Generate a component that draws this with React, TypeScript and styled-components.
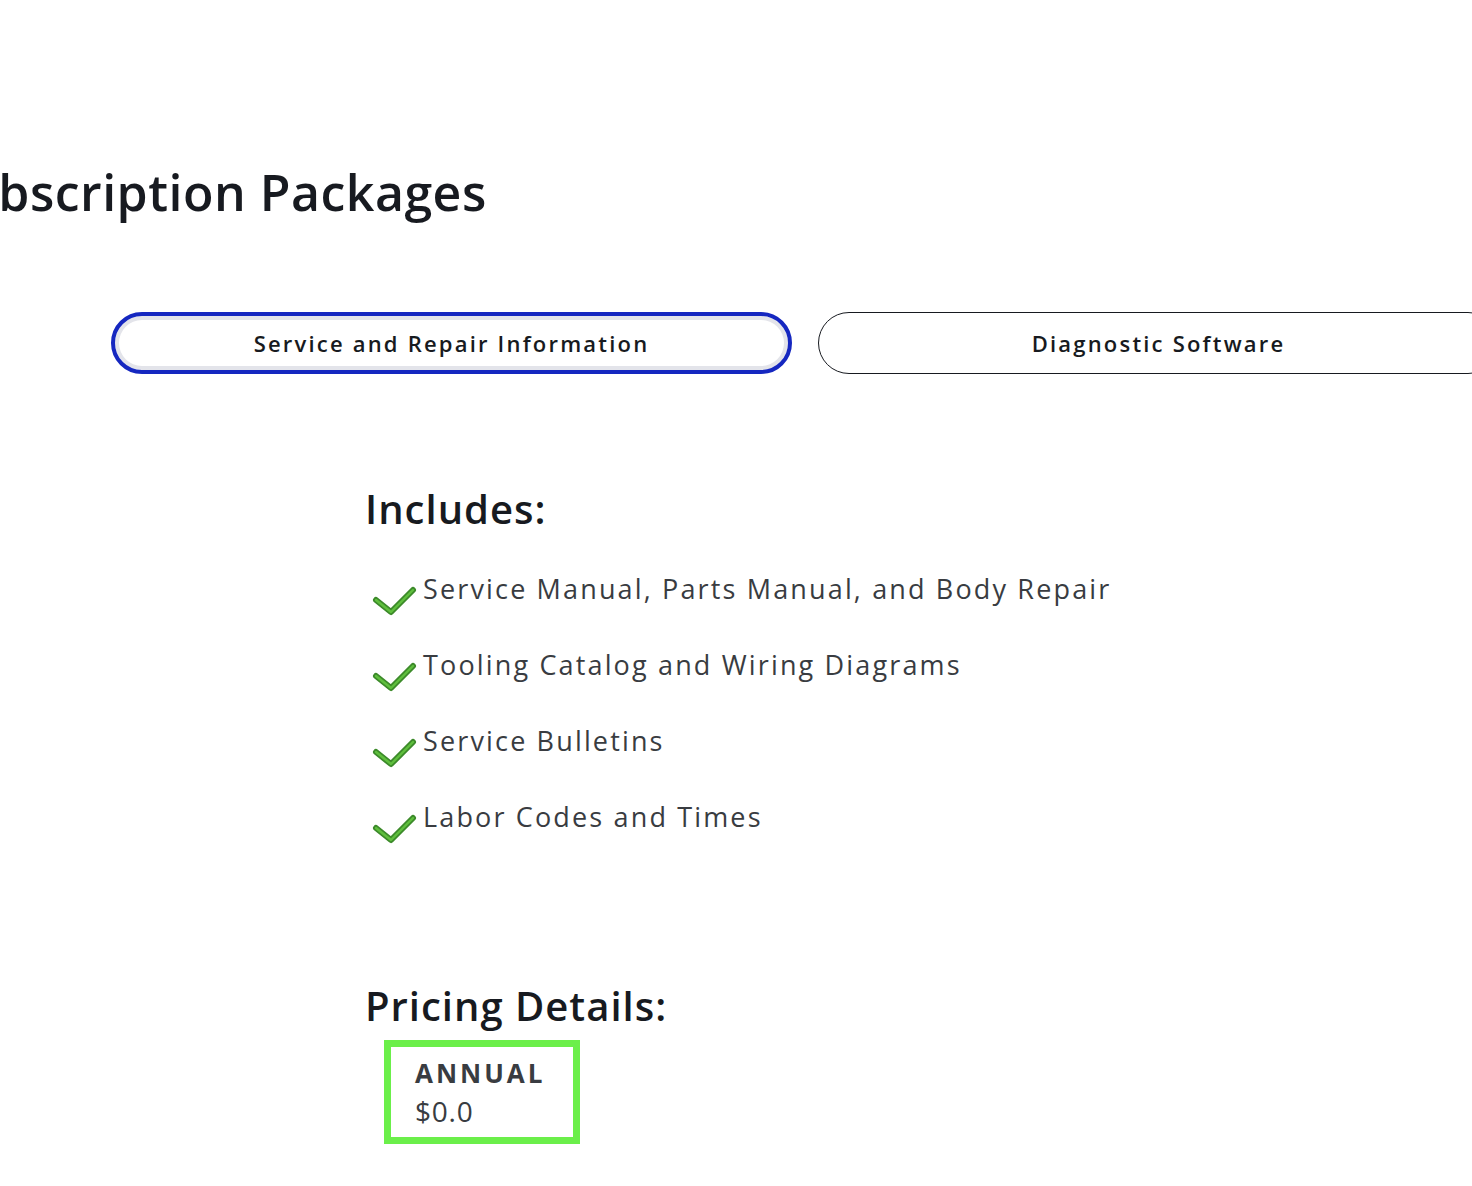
import React, { useState } from "react";
import styled, { createGlobalStyle } from "styled-components";

const INCLUDES = [
  "Service Manual, Parts Manual, and Body Repair",
  "Tooling Catalog and Wiring Diagrams",
  "Service Bulletins",
  "Labor Codes and Times",
];

const TABS = ["Service and Repair Information", "Diagnostic Software"];

const GlobalStyle = createGlobalStyle`
  html, body {
    margin: 0;
    padding: 0;
    background: #fff;
    overflow-x: hidden;
  }
  body {
    font-family: "Open Sans", "Lato", "Liberation Sans", sans-serif;
    color: #171a20;
  }
`;

const CheckIcon = () => (
  <svg width="46" height="36" viewBox="0 0 46 36" fill="none">
    <polyline
      points="5,18 20,30 42,8"
      stroke="#3c8a2a"
      strokeWidth="6"
      strokeLinecap="round"
      strokeLinejoin="round"
    />
    <polyline
      points="5,18 20,30 42,8"
      stroke="#5fbf3d"
      strokeWidth="2.4"
      strokeLinecap="round"
      strokeLinejoin="round"
    />
  </svg>
);

const App: React.FC = () => {
  const [active, setActive] = useState(0);

  return (
    <>
      <GlobalStyle />
      <StyledPage>
        <StyledTitle>Subscription Packages</StyledTitle>
        <StyledTabs>
          {TABS.map((tab, index) => (
            <StyledTab
              key={tab}
              active={active === index}
              onClick={() => setActive(index)}
            >
              {tab}
            </StyledTab>
          ))}
        </StyledTabs>
        <StyledContent>
          <StyledHeading>Includes:</StyledHeading>
          <StyledList>
            {INCLUDES.map((item) => (
              <StyledItem key={item}>
                <CheckIcon />
                <span>{item}</span>
              </StyledItem>
            ))}
          </StyledList>
          <StyledHeading top={143}>Pricing Details:</StyledHeading>
          <StyledPriceBox>
            <StyledPriceLabel>ANNUAL</StyledPriceLabel>
            <StyledPriceValue>$0.0</StyledPriceValue>
          </StyledPriceBox>
        </StyledContent>
      </StyledPage>
    </>
  );
};
export default App;

const StyledPage = styled.div`
  padding-top: 162px;
  padding-bottom: 40px;
`;

const StyledTitle = styled.h1`
  margin: 0 0 0 -62px;
  font-size: 50px;
  font-weight: 600;
  line-height: 60px;
  letter-spacing: 0.5px;
  white-space: nowrap;
  color: #171a20;
`;

const StyledTabs = styled.div`
  display: flex;
  gap: 26px;
  margin-top: 90px;
  margin-left: 111px;
  width: 1388px;
`;

const StyledTab = styled.button<{ active: boolean }>`
  flex: 0 0 681px;
  height: 62px;
  box-sizing: border-box;
  border-radius: 31px;
  background: #fff;
  border: ${(props) =>
    props.active ? "4px solid #1527c0" : "1.5px solid #171a20"};
  box-shadow: ${(props) => (props.active ? "inset 0 0 0 4px #e3e4ea" : "none")};
  font-family: "Open Sans", "Liberation Sans", sans-serif;
  font-size: 22px;
  font-weight: 600;
  letter-spacing: 2.2px;
  color: #171a20;
  cursor: pointer;
`;

const StyledContent = styled.section`
  margin-left: 365px;
  padding-top: 110px;
`;

const StyledHeading = styled.h2<{ top?: number }>`
  margin: ${(props) => (props.top ? props.top + "px" : "0")} 0 0;
  font-size: 40px;
  font-weight: 600;
  line-height: 50px;
  letter-spacing: 1px;
  color: #171a20;
`;

const StyledList = styled.ul`
  list-style: none;
  margin: 40px 0 0;
  padding: 0 0 0 6px;
  display: flex;
  flex-direction: column;
  gap: 40px;
`;

const StyledItem = styled.li`
  display: flex;
  align-items: flex-start;
  gap: 6px;
  height: 36px;
  font-size: 27px;
  line-height: 30px;
  letter-spacing: 2.15px;
  color: #393c41;

  svg {
    margin-top: 8px;
  }
`;

const StyledPriceBox = styled.div`
  display: inline-flex;
  flex-direction: column;
  width: 196px;
  box-sizing: border-box;
  margin: 9px 0 0 19px;
  padding: 7px 24px 7px 24px;
  border: 7px solid #6bef4a;
`;

const StyledPriceLabel = styled.span`
  font-size: 26px;
  font-weight: 700;
  letter-spacing: 3px;
  line-height: 38px;
  color: #393c41;
`;

const StyledPriceValue = styled.span`
  font-size: 28px;
  line-height: 38px;
  letter-spacing: 0.8px;
  color: #393c41;
`;
